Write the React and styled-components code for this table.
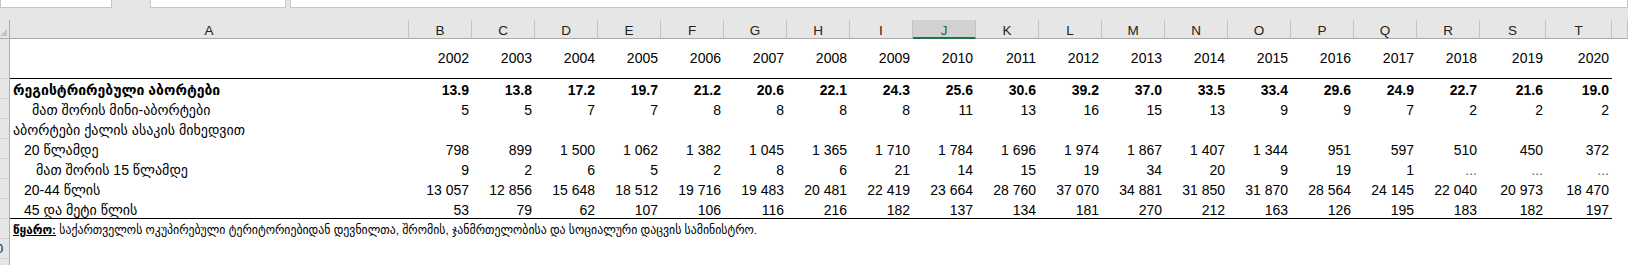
import React from 'react';
import styled, { createGlobalStyle } from 'styled-components';

const GlobalStyle = createGlobalStyle`
  body {
    margin: 0;
    background: #ffffff;
    font-family: "Liberation Sans", "DejaVu Sans", sans-serif;
  }
`;

const COLS = '10px 399px repeat(17, 63px) 66px 66px 1fr';
const LETTERS = 'ABCDEFGHIJKLMNOPQRST'.split('');
const ACTIVE = 'J';

const years = [2002, 2003, 2004, 2005, 2006, 2007, 2008, 2009, 2010, 2011, 2012, 2013, 2014, 2015, 2016, 2017, 2018, 2019, 2020];

const rows = [
  {
    label: 'რეგისტრირებული აბორტები', indent: 3, bold: true,
    values: ['13.9', '13.8', '17.2', '19.7', '21.2', '20.6', '22.1', '24.3', '25.6', '30.6', '39.2', '37.0', '33.5', '33.4', '29.6', '24.9', '22.7', '21.6', '19.0'],
  },
  {
    label: 'მათ შორის მინი-აბორტები', indent: 22,
    values: ['5', '5', '7', '7', '8', '8', '8', '8', '11', '13', '16', '15', '13', '9', '9', '7', '2', '2', '2'],
  },
  { label: 'აბორტები ქალის ასაკის მიხედვით', indent: 3, values: [] },
  {
    label: '20 წლამდე', indent: 14,
    values: ['798', '899', '1 500', '1 062', '1 382', '1 045', '1 365', '1 710', '1 784', '1 696', '1 974', '1 867', '1 407', '1 344', '951', '597', '510', '450', '372'],
  },
  {
    label: 'მათ შორის 15 წლამდე', indent: 26,
    values: ['9', '2', '6', '5', '2', '8', '6', '21', '14', '15', '19', '34', '20', '9', '19', '1', '...', '...', '...'],
  },
  {
    label: '20-44 წლის', indent: 14,
    values: ['13 057', '12 856', '15 648', '18 512', '19 716', '19 483', '20 481', '22 419', '23 664', '28 760', '37 070', '34 881', '31 850', '31 870', '28 564', '24 145', '22 040', '20 973', '18 470'],
  },
  {
    label: '45 და მეტი წლის', indent: 14, rule: true,
    values: ['53', '79', '62', '107', '106', '116', '216', '182', '137', '134', '181', '270', '212', '163', '126', '195', '183', '182', '197'],
  },
];

const Sheet = styled.div`
  width: 1628px;
  height: 265px;
  overflow: hidden;
  background: #e6e6e6;
  color: #000;
`;

const FormulaStrip = styled.div`
  display: flex;
  height: 8px;
  gap: 4px;
`;

const FormulaBox = styled.div`
  box-sizing: border-box;
  width: ${(p) => (p.$width ? `${p.$width}px` : 'auto')};
  flex: ${(p) => (p.$width ? 'none' : '1')};
  margin-left: ${(p) => p.$offset || 0}px;
  background: #fff;
  border: 1px solid #c6c6c6;
  border-top: none;
`;

const HeaderGap = styled.div`
  height: 12px;
`;

const Grid = styled.div`
  display: grid;
  grid-template-columns: ${COLS};
  grid-template-rows: 19px 40px;
  grid-auto-rows: 20px;
  background: #fff;
`;

const Corner = styled.div`
  position: relative;
  background: #e6e6e6;
  border-right: 1px solid #ababab;
  border-bottom: 1px solid #ababab;
  &::after {
    content: '';
    position: absolute;
    right: 2px;
    bottom: 2px;
    border-left: 7px solid transparent;
    border-bottom: 7px solid #c4c4c4;
  }
`;

const ColHead = styled.div`
  box-sizing: border-box;
  display: flex;
  align-items: center;
  justify-content: center;
  padding-top: 3px;
  font-size: 13.5px;
  color: ${(p) => (p.$active ? '#1e6b41' : '#222')};
  background: ${(p) => (p.$active ? '#d2d2d2' : '#e6e6e6')};
  border-right: 1px solid #c3c3c3;
  border-bottom: ${(p) => (p.$active ? '2px solid #217346' : '1px solid #ababab')};
`;

const RowHead = styled.div`
  box-sizing: border-box;
  overflow: hidden;
  background: #e6e6e6;
  border-right: 1px solid #ababab;
  border-bottom: 1px solid #d0d0d0;
  font-size: 13px;
  color: #222;
  line-height: 19px;
`;

const RowNum = styled.span`
  display: block;
  width: 22px;
  margin-left: -15px;
  text-align: center;
`;

const Cell = styled.div`
  box-sizing: border-box;
  white-space: nowrap;
  font-size: 14px;
  font-weight: ${(p) => (p.$bold ? 700 : 400)};
  text-align: ${(p) => (p.$left ? 'left' : 'right')};
  padding: ${(p) => (p.$tall ? '0 3px 0 0' : '3px 3px 0 0')};
  line-height: ${(p) => (p.$tall ? '39px' : '17px')};
  padding-left: ${(p) => p.$indent || 0}px;
  border-bottom: ${(p) => (p.$rule ? '1px solid #000' : 'none')};
  color: ${(p) => (p.$dim ? '#6a6a6a' : '#000')};
`;

const Source = styled.div`
  grid-column: 2 / -1;
  white-space: nowrap;
  font-size: 11.8px;
  line-height: 18px;
  padding: 2px 0 0 3px;
`;

const SourceKey = styled.span`
  font-weight: 700;
  text-decoration: underline;
`;

const Filler = styled.div`
  grid-column: 2 / -1;
`;

const DataRow = ({ num, row }) => (
  <>
    <RowHead><RowNum>{num}</RowNum></RowHead>
    <Cell $left $bold={row.bold} $indent={row.indent} $rule={row.rule}>{row.label}</Cell>
    {years.map((y, i) => (
      <Cell key={y} $bold={row.bold} $rule={row.rule} $dim={row.values[i] === '...'}>
        {row.values[i] || ''}
      </Cell>
    ))}
    <Cell />
  </>
);

const App = () => (
  <Sheet>
    <GlobalStyle />
    <FormulaStrip>
      <FormulaBox $width={112} />
      <FormulaBox $width={136} $offset={34} />
      <FormulaBox />
    </FormulaStrip>
    <HeaderGap />
    <Grid>
      <Corner />
      {LETTERS.map((l) => (
        <ColHead key={l} $active={l === ACTIVE}>{l}</ColHead>
      ))}
      <ColHead />

      <RowHead><RowNum>1</RowNum></RowHead>
      <Cell $tall $rule />
      {years.map((y) => (
        <Cell key={y} $tall $rule>{y}</Cell>
      ))}
      <Cell $tall />

      {rows.map((row, i) => (
        <DataRow key={row.label} num={i + 2} row={row} />
      ))}

      <RowHead><RowNum>9</RowNum></RowHead>
      <Source>
        <SourceKey>წყარო:</SourceKey> საქართველოს ოკუპირებული ტერიტორიებიდან დევნილთა, შრომის, ჯანმრთელობისა და სოციალური დაცვის სამინისტრო.
      </Source>

      <RowHead><RowNum>10</RowNum></RowHead>
      <Filler />
      <RowHead><RowNum>11</RowNum></RowHead>
      <Filler />
    </Grid>
  </Sheet>
);

export default App;
